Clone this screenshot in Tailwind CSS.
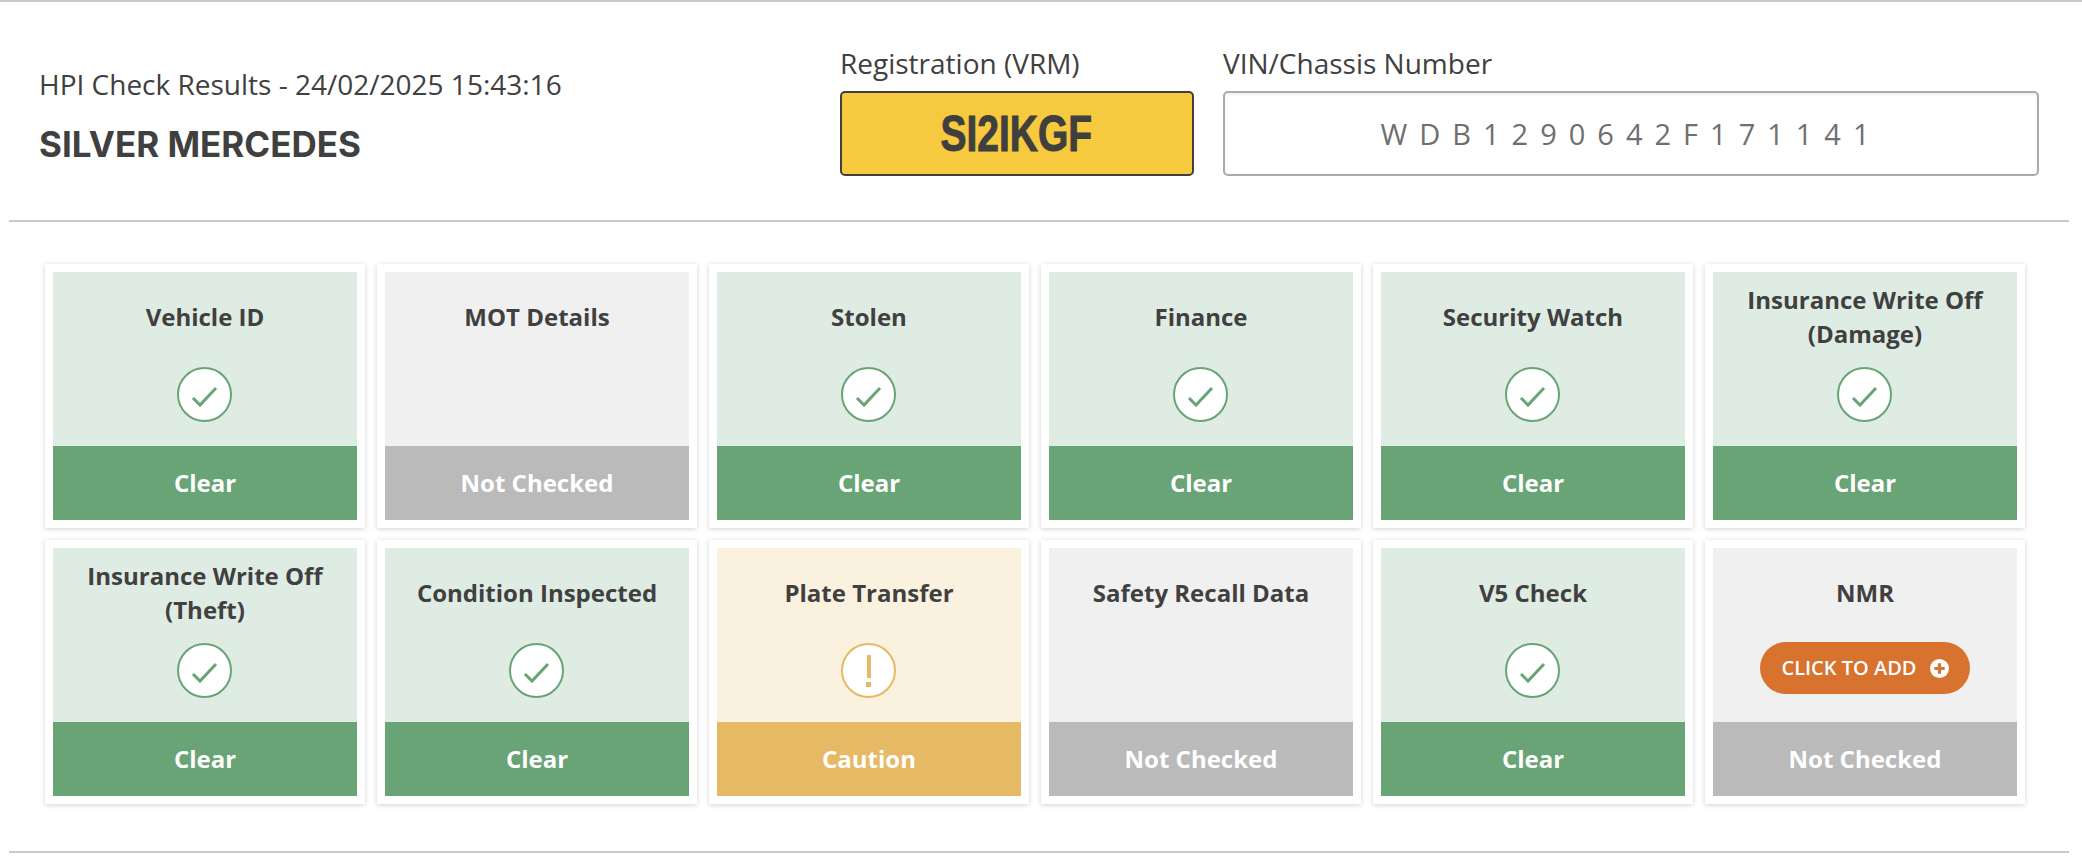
<!doctype html>
<html>

<head>
    <meta charset="UTF-8">
    <meta name="viewport" content="width=device-width, initial-scale=1.0">
    <script src="https://cdn.jsdelivr.net/npm/@tailwindcss/browser@4"></script>
    <title>HPI Check Results</title>
</head>

<body class="bg-white text-[#404040] font-['Open_Sans',sans-serif] overflow-hidden">
    <div class="h-[2px] bg-[#c8c8c8]"></div>

    <!-- Header -->
    <header class="mx-[9px] w-[2060px] h-[220px] border-b-2 border-[#c8c8c8] pt-[42px] pl-[31px] pr-[30px] flex justify-between">
        <div class="ml-[-1px]">
            <p class="text-[28px] leading-[38px] pt-[21px]">HPI Check Results - 24/02/2025 15:43:16</p>
            <h1 class="font-['Inter',sans-serif] font-bold text-[35px] leading-[42px] mt-[20px]">SILVER MERCEDES</h1>
        </div>
        <div class="flex gap-[29px]">
            <div class="w-[354px]">
                <p class="text-[28px] leading-[38px] mb-[9px]">Registration (VRM)</p>
                <div class="h-[85px] bg-[#f6c93f] border-2 border-[#3f3f3f] rounded-[5px] flex items-center justify-center">
                    <span class="mr-[2px] font-['Liberation_Sans',sans-serif] font-bold text-[50px] leading-none scale-x-[.78] [-webkit-text-stroke:1px_#3f3f3f] text-[#3f3f3f]">SI2IKGF</span>
                </div>
            </div>
            <div class="w-[816px]">
                <p class="text-[28px] leading-[38px] mb-[9px]">VIN/Chassis Number</p>
                <div class="h-[85px] bg-white border-2 border-[#aaaaaa] rounded-[5px] shadow-[inset_0_2px_3px_rgba(0,0,0,0.06)] flex items-center justify-center text-[29px] tracking-[12px] text-[#6f6f6f]">WDB1290642F171141</div>
            </div>
        </div>
    </header>

    <!-- Check cards -->
    <div class="ml-[45px] mt-[42px] w-[1980px] grid grid-cols-6 gap-[12px]">

        <div class="h-[264px] p-[8px] bg-white shadow-[0_1px_5px_rgba(0,0,0,0.18)] flex flex-col">
            <div class="flex-1 bg-[#dfece3] flex flex-col items-center pt-[11px]">
                <h3 class="h-[68px] flex items-center text-center font-bold text-[24px] leading-[34px]">Vehicle ID</h3>
                <div class="mt-[16px] mr-[1px] w-[55px] h-[55px] rounded-full bg-white border-2 border-[#68a475] flex items-center justify-center">
                    <svg class="w-[32px] h-[32px]" viewBox="0 0 32 32" fill="none" stroke="#68a475" stroke-width="3"><path d="M4 19l7 7L27 9"/></svg>
                </div>
            </div>
            <div class="h-[74px] bg-[#68a475] flex items-center justify-center text-white font-bold text-[24px]">Clear</div>
        </div>

        <div class="h-[264px] p-[8px] bg-white shadow-[0_1px_5px_rgba(0,0,0,0.18)] flex flex-col">
            <div class="flex-1 bg-[#f0f0f0] flex flex-col items-center pt-[11px]">
                <h3 class="h-[68px] flex items-center text-center font-bold text-[24px] leading-[34px]">MOT Details</h3>
            </div>
            <div class="h-[74px] bg-[#bababa] flex items-center justify-center text-white font-bold text-[24px]">Not Checked</div>
        </div>

        <div class="h-[264px] p-[8px] bg-white shadow-[0_1px_5px_rgba(0,0,0,0.18)] flex flex-col">
            <div class="flex-1 bg-[#dfece3] flex flex-col items-center pt-[11px]">
                <h3 class="h-[68px] flex items-center text-center font-bold text-[24px] leading-[34px]">Stolen</h3>
                <div class="mt-[16px] mr-[1px] w-[55px] h-[55px] rounded-full bg-white border-2 border-[#68a475] flex items-center justify-center">
                    <svg class="w-[32px] h-[32px]" viewBox="0 0 32 32" fill="none" stroke="#68a475" stroke-width="3"><path d="M4 19l7 7L27 9"/></svg>
                </div>
            </div>
            <div class="h-[74px] bg-[#68a475] flex items-center justify-center text-white font-bold text-[24px]">Clear</div>
        </div>

        <div class="h-[264px] p-[8px] bg-white shadow-[0_1px_5px_rgba(0,0,0,0.18)] flex flex-col">
            <div class="flex-1 bg-[#dfece3] flex flex-col items-center pt-[11px]">
                <h3 class="h-[68px] flex items-center text-center font-bold text-[24px] leading-[34px]">Finance</h3>
                <div class="mt-[16px] mr-[1px] w-[55px] h-[55px] rounded-full bg-white border-2 border-[#68a475] flex items-center justify-center">
                    <svg class="w-[32px] h-[32px]" viewBox="0 0 32 32" fill="none" stroke="#68a475" stroke-width="3"><path d="M4 19l7 7L27 9"/></svg>
                </div>
            </div>
            <div class="h-[74px] bg-[#68a475] flex items-center justify-center text-white font-bold text-[24px]">Clear</div>
        </div>

        <div class="h-[264px] p-[8px] bg-white shadow-[0_1px_5px_rgba(0,0,0,0.18)] flex flex-col">
            <div class="flex-1 bg-[#dfece3] flex flex-col items-center pt-[11px]">
                <h3 class="h-[68px] flex items-center text-center font-bold text-[24px] leading-[34px]">Security Watch</h3>
                <div class="mt-[16px] mr-[1px] w-[55px] h-[55px] rounded-full bg-white border-2 border-[#68a475] flex items-center justify-center">
                    <svg class="w-[32px] h-[32px]" viewBox="0 0 32 32" fill="none" stroke="#68a475" stroke-width="3"><path d="M4 19l7 7L27 9"/></svg>
                </div>
            </div>
            <div class="h-[74px] bg-[#68a475] flex items-center justify-center text-white font-bold text-[24px]">Clear</div>
        </div>

        <div class="h-[264px] p-[8px] bg-white shadow-[0_1px_5px_rgba(0,0,0,0.18)] flex flex-col">
            <div class="flex-1 bg-[#dfece3] flex flex-col items-center pt-[11px]">
                <h3 class="h-[68px] flex items-center text-center font-bold text-[24px] leading-[34px]">Insurance Write Off<br>(Damage)</h3>
                <div class="mt-[16px] mr-[1px] w-[55px] h-[55px] rounded-full bg-white border-2 border-[#68a475] flex items-center justify-center">
                    <svg class="w-[32px] h-[32px]" viewBox="0 0 32 32" fill="none" stroke="#68a475" stroke-width="3"><path d="M4 19l7 7L27 9"/></svg>
                </div>
            </div>
            <div class="h-[74px] bg-[#68a475] flex items-center justify-center text-white font-bold text-[24px]">Clear</div>
        </div>

        <div class="h-[264px] p-[8px] bg-white shadow-[0_1px_5px_rgba(0,0,0,0.18)] flex flex-col">
            <div class="flex-1 bg-[#dfece3] flex flex-col items-center pt-[11px]">
                <h3 class="h-[68px] flex items-center text-center font-bold text-[24px] leading-[34px]">Insurance Write Off<br>(Theft)</h3>
                <div class="mt-[16px] mr-[1px] w-[55px] h-[55px] rounded-full bg-white border-2 border-[#68a475] flex items-center justify-center">
                    <svg class="w-[32px] h-[32px]" viewBox="0 0 32 32" fill="none" stroke="#68a475" stroke-width="3"><path d="M4 19l7 7L27 9"/></svg>
                </div>
            </div>
            <div class="h-[74px] bg-[#68a475] flex items-center justify-center text-white font-bold text-[24px]">Clear</div>
        </div>

        <div class="h-[264px] p-[8px] bg-white shadow-[0_1px_5px_rgba(0,0,0,0.18)] flex flex-col">
            <div class="flex-1 bg-[#dfece3] flex flex-col items-center pt-[11px]">
                <h3 class="h-[68px] flex items-center text-center font-bold text-[24px] leading-[34px]">Condition Inspected</h3>
                <div class="mt-[16px] mr-[1px] w-[55px] h-[55px] rounded-full bg-white border-2 border-[#68a475] flex items-center justify-center">
                    <svg class="w-[32px] h-[32px]" viewBox="0 0 32 32" fill="none" stroke="#68a475" stroke-width="3"><path d="M4 19l7 7L27 9"/></svg>
                </div>
            </div>
            <div class="h-[74px] bg-[#68a475] flex items-center justify-center text-white font-bold text-[24px]">Clear</div>
        </div>

        <div class="h-[264px] p-[8px] bg-white shadow-[0_1px_5px_rgba(0,0,0,0.18)] flex flex-col">
            <div class="flex-1 bg-[#faf1df] flex flex-col items-center pt-[11px]">
                <h3 class="h-[68px] flex items-center text-center font-bold text-[24px] leading-[34px]">Plate Transfer</h3>
                <div class="mt-[16px] mr-[1px] w-[55px] h-[55px] rounded-full bg-white border-2 border-[#e6b965] flex flex-col items-center justify-center">
                    <div class="w-[4px] h-[23px] bg-[#e6b965]"></div>
                    <div class="w-[5px] h-[5px] mt-[4px] bg-[#e6b965]"></div>
                </div>
            </div>
            <div class="h-[74px] bg-[#e6b965] flex items-center justify-center text-white font-bold text-[24px]">Caution</div>
        </div>

        <div class="h-[264px] p-[8px] bg-white shadow-[0_1px_5px_rgba(0,0,0,0.18)] flex flex-col">
            <div class="flex-1 bg-[#f0f0f0] flex flex-col items-center pt-[11px]">
                <h3 class="h-[68px] flex items-center text-center font-bold text-[24px] leading-[34px]">Safety Recall Data</h3>
            </div>
            <div class="h-[74px] bg-[#bababa] flex items-center justify-center text-white font-bold text-[24px]">Not Checked</div>
        </div>

        <div class="h-[264px] p-[8px] bg-white shadow-[0_1px_5px_rgba(0,0,0,0.18)] flex flex-col">
            <div class="flex-1 bg-[#dfece3] flex flex-col items-center pt-[11px]">
                <h3 class="h-[68px] flex items-center text-center font-bold text-[24px] leading-[34px]">V5 Check</h3>
                <div class="mt-[16px] mr-[1px] w-[55px] h-[55px] rounded-full bg-white border-2 border-[#68a475] flex items-center justify-center">
                    <svg class="w-[32px] h-[32px]" viewBox="0 0 32 32" fill="none" stroke="#68a475" stroke-width="3"><path d="M4 19l7 7L27 9"/></svg>
                </div>
            </div>
            <div class="h-[74px] bg-[#68a475] flex items-center justify-center text-white font-bold text-[24px]">Clear</div>
        </div>

        <div class="h-[264px] p-[8px] bg-white shadow-[0_1px_5px_rgba(0,0,0,0.18)] flex flex-col">
            <div class="flex-1 bg-[#f0f0f0] flex flex-col items-center pt-[11px]">
                <h3 class="h-[68px] flex items-center text-center font-bold text-[24px] leading-[34px]">NMR</h3>
                <button class="mt-[15px] w-[210px] h-[52px] rounded-full bg-[#d7722f] text-white font-semibold text-[20px] flex items-center justify-center gap-[13px]">
                    CLICK TO ADD
                    <svg class="w-[19px] h-[19px]" viewBox="0 0 20 20"><circle cx="10" cy="10" r="10" fill="#fff"/><path d="M10 4.5v11M4.5 10h11" stroke="#d7722f" stroke-width="3.4"/></svg>
                </button>
            </div>
            <div class="h-[74px] bg-[#bababa] flex items-center justify-center text-white font-bold text-[24px]">Not Checked</div>
        </div>

    </div>

    <div class="mx-[9px] w-[2060px] mt-[47px] h-[2px] bg-[#c8c8c8]"></div>
</body>

</html>
